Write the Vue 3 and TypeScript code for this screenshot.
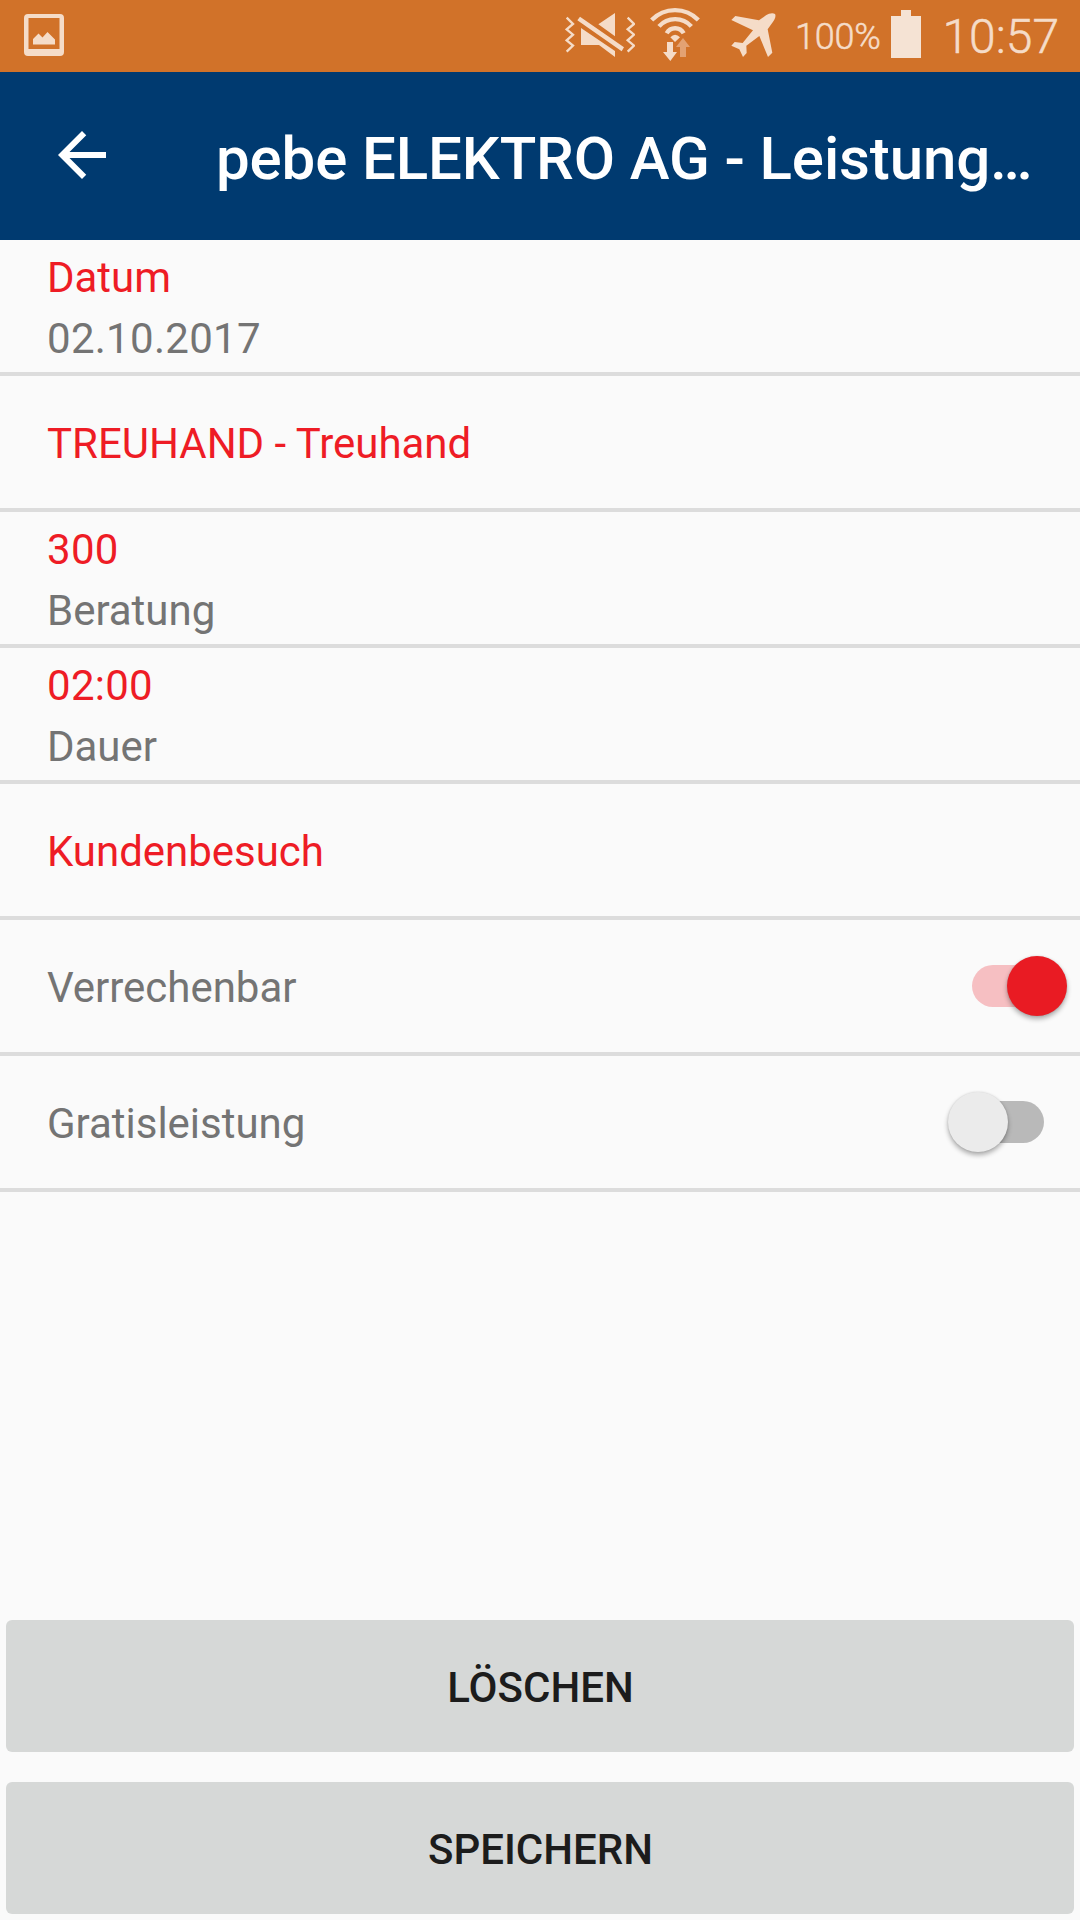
<script setup lang="ts">
import { ref } from 'vue'

interface Entry {
  primary: string
  secondary?: string
}

const entries: Entry[] = [
  { primary: 'Datum', secondary: '02.10.2017' },
  { primary: 'TREUHAND - Treuhand' },
  { primary: '300', secondary: 'Beratung' },
  { primary: '02:00', secondary: 'Dauer' },
  { primary: 'Kundenbesuch' },
]

const options = ref([
  { label: 'Verrechenbar', on: true },
  { label: 'Gratisleistung', on: false },
])

const actions = ['LÖSCHEN', 'SPEICHERN']

const isNumeric = (s: string) => /^[\d.:]+$/.test(s)
</script>

<template>
  <div class="screen">
    <div class="status">
      <svg class="picture" width="40" height="42" viewBox="0 0 40 42">
        <path fill-rule="evenodd" d="M4 0H36Q40 0 40 4V38Q40 42 36 42H4Q0 42 0 38V4Q0 0 4 0ZM4.5 4V35H35.5V4Z" />
        <path d="M9 30.5V25L14.5 19.5L18.500 23.500L23.500 18L31 25.500V30.500Z" />
      </svg>
      <svg class="mute" width="70" height="72" viewBox="45 0 210 216">
        <path class="wave" d="M50 53L69 72L50 88L69 104L50 121L69 137L50 155M233 53L252 72L233 88L252 104L233 121L252 137L233 155" />
        <path d="M145 73L195 39V109ZM90 50L222 142L215 154L82 61ZM93 84L195 153V171L147 135H93Z" />
      </svg>
      <svg class="wifi" width="50" height="72" viewBox="300 0 150 216">
        <path class="arc" d="M305 60A97 97 0 0 1 445 60M327 79A65 65 0 0 1 424 79M350 100A29 29 0 0 1 401 100" />
        <path d="M361 112Q375 97 390 112L375 126ZM351 126H369V156H381L361 183L339 156H351Z" />
        <path class="dim" d="M399 114L420 141H408V171H390V141H378Z" />
      </svg>
      <svg class="plane" width="46" height="72" viewBox="544 0 138 216">
        <path d="M545 60L557 48L628 61L649 46C658 39 671 38 676 42C680 48 675 60 668 68L654 88L668 158L655 171L629 108L590 137L591 159L580 171L569 148L545 137L555 126L579 129L610 91Z" />
      </svg>
      <span class="percent">100%</span>
      <svg class="battery" width="30" height="48" viewBox="0 0 30 48">
        <path d="M10 0H20V6H30V48H0V6H10Z" />
      </svg>
      <span class="clock">10:57</span>
    </div>

    <header class="bar">
      <svg class="back" width="72" height="72" viewBox="0 0 24 24">
        <path d="M20 11H7.83l5.59-5.59L12 4l-8 8 8 8 1.41-1.41L7.83 13H20v-2z" />
      </svg>
      <h1>pebe ELEKTRO AG - Leistung…</h1>
    </header>

    <main>
      <div v-for="e in entries" :key="e.primary" class="row" :class="{ double: e.secondary }">
        <div class="text">
          <div class="primary" :class="{ numeric: isNumeric(e.primary) }">{{ e.primary }}</div>
          <div v-if="e.secondary" :class="{ numeric: isNumeric(e.secondary) }">{{ e.secondary }}</div>
        </div>
      </div>
      <div v-for="o in options" :key="o.label" class="row">
        <div class="text">{{ o.label }}</div>
        <div class="switch" :class="{ on: o.on }" @click="o.on = !o.on">
          <div class="track"></div>
          <div class="thumb"></div>
        </div>
      </div>
    </main>

    <footer>
      <button v-for="a in actions" :key="a" type="button">{{ a }}</button>
    </footer>
  </div>
</template>

<style>
body {
  margin: 0;
  background: #fafafa;
}
</style>

<style scoped>
.screen {
  width: 1080px;
  height: 1920px;
  display: flex;
  flex-direction: column;
  background: #fafafa;
  font-family: Roboto, "Liberation Sans", sans-serif;
  overflow: hidden;
}
.status {
  height: 72px;
  flex: none;
  display: flex;
  align-items: flex-start;
  background: #d17229;
  color: #f5dcc8;
  fill: #f5dcc8;
  font-weight: 300;
  -webkit-text-stroke: 0.5px #f5dcc8;
}
.status svg {
  flex: none;
}
.picture {
  margin: 14px 0 0 24px;
}
.mute {
  margin-left: 501px;
}
.wave {
  fill: none;
  stroke: #f5dcc8;
  stroke-width: 7;
}
.wifi {
  margin-left: 15px;
}
.arc {
  fill: none;
  stroke: #f5dcc8;
  stroke-width: 13;
}
.dim {
  fill: #e3a273;
}
.plane {
  margin-left: 31.3px;
}
.percent {
  width: 96px;
  margin-left: 17.7px;
  box-sizing: border-box;
  font-size: 36px;
  line-height: 74px;
  letter-spacing: -0.2px;
  white-space: nowrap;
}
.battery {
  margin-top: 10px;
  fill: #f5e3d4;
}
.clock {
  margin-left: 21.5px;
  font-size: 48px;
  line-height: 73px;
}
.bar {
  height: 168px;
  flex: none;
  display: flex;
  align-items: center;
  background: #003a70;
  color: #fff;
}
.back {
  flex: none;
  margin: 0 0 2px 46px;
  fill: #fff;
}
h1 {
  margin: 0 0 0 98px;
  padding-top: 5px;
  font-size: 60px;
  line-height: 70px;
  font-weight: 500;
  letter-spacing: -0.12px;
  white-space: nowrap;
}
.row {
  height: 132px;
  display: flex;
  align-items: center;
  justify-content: space-between;
  padding: 0 12px 0 47px;
  border-bottom: 4px solid #dcdcdc;
  font-size: 42px;
  line-height: 61px;
  letter-spacing: -0.02px;
  color: #747474;
}
.text {
  padding-top: 3px;
}
.double .text {
  padding-top: 4px;
}
.primary {
  color: #ee1c25;
}
.numeric {
  letter-spacing: 0.28px;
}
.switch {
  position: relative;
  width: 120px;
  height: 61px;
}
.track {
  width: 72px;
  height: 42px;
  margin: 9.5px 24px;
  border-radius: 21px;
  background: #b9b9b9;
}
.thumb {
  position: absolute;
  top: 0.8px;
  left: 0.2px;
  width: 60px;
  height: 60px;
  border-radius: 50%;
  background: #ebebeb;
  box-shadow: 0 3px 5px rgba(0, 0, 0, 0.32), 0 0 2px rgba(0, 0, 0, 0.12);
}
.on .track {
  background: #f6bfc2;
}
.on .thumb {
  left: auto;
  right: 0.7px;
  background: #e91b23;
}
footer {
  margin-top: auto;
  padding: 6px;
  display: flex;
  flex-direction: column;
  gap: 30px;
}
button {
  height: 132px;
  border: 0;
  border-radius: 6px;
  padding: 3px 0 0 1px;
  background: #d6d8d7;
  color: #1c1c1c;
  font-family: inherit;
  font-size: 42px;
  font-weight: 500;
}
</style>
